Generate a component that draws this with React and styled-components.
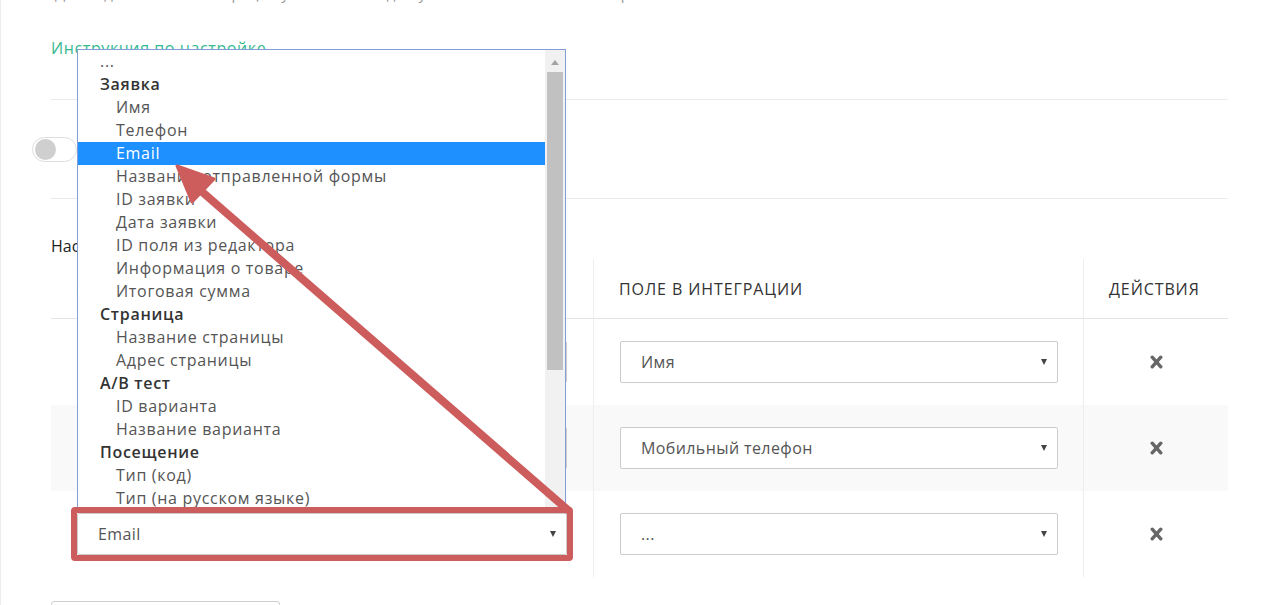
import React from 'react';
import styled, { createGlobalStyle } from 'styled-components';

const GlobalStyle = createGlobalStyle`
	html, body {
		margin: 0;
		padding: 0;
		background: #fff;
	}
	body {
		font-family: 'Open Sans', 'Lato', sans-serif;
		color: #333;
		overflow: hidden;
	}
`;

const Page = styled.div`
	position: relative;
	display: flow-root;
	width: 1273px;
	height: 605px;
	box-sizing: border-box;
	padding-left: 51px;
	box-shadow: inset 1px 0 0 #ececec;
	overflow: hidden;
`;

const Content = styled.div`
	width: 1177px;
`;

const TopNote = styled.p`
	margin: -16px 0 0 4px;
	height: 18px;
	line-height: 18px;
	font-size: 15px;
	color: #999;
	white-space: nowrap;
`;

const LinkSection = styled.div`
	height: 98px;
	box-sizing: border-box;
	padding-top: 35px;
	border-bottom: 1px solid #ebebeb;
`;

const Link = styled.a`
	font-size: 16px;
	line-height: 20px;
	color: #35b88f;
	text-decoration: none;
	letter-spacing: 0.6px;
`;

const ToggleSection = styled.div`
	height: 99px;
	box-sizing: border-box;
	display: flex;
	align-items: center;
	border-bottom: 1px solid #ebebeb;
`;

const Toggle = styled.span`
	display: inline-block;
	position: relative;
	margin-left: -19px;
	width: 45px;
	height: 25px;
	box-sizing: border-box;
	border: 1px solid #dedede;
	border-radius: 13px;
	background: #fff;
	&::before {
		content: '';
		position: absolute;
		top: 1px;
		left: 2px;
		width: 21px;
		height: 21px;
		border-radius: 50%;
		background: #cfcfcf;
	}
`;

const ToggleLabel = styled.span`
	margin-left: 14px;
	font-size: 16px;
	color: #333;
`;

const Heading = styled.h3`
	margin: 37px 0 3px;
	font-size: 16px;
	line-height: 20px;
	font-weight: 500;
	color: #222;
`;

const Table = styled.div`
	display: grid;
	grid-template-columns: 542px 490px 145px;
`;

const HeadCell = styled.div`
	height: 60px;
	display: flex;
	align-items: center;
	justify-content: flex-start;
	padding: 0 25px;
	box-sizing: border-box;
	border-bottom: 1px solid #e4e4e4;
	border-left: ${(p) => (p.$first ? 'none' : '1px solid #eeeeee')};
	font-size: 16px;
	font-weight: 500;
	text-transform: uppercase;
	color: #333;
	letter-spacing: 0.9px;
	white-space: nowrap;
`;

const Cell = styled.div`
	height: 86px;
	display: flex;
	align-items: center;
	justify-content: ${(p) => (p.$center ? 'center' : 'stretch')};
	padding: 0 ${(p) => (p.$first ? '26px' : '25px')} 0 26px;
	box-sizing: border-box;
	background: ${(p) => (p.$striped ? '#f9f9f9' : '#fff')};
	border-left: ${(p) => (p.$first ? 'none' : '1px solid #eeeeee')};
`;

const SelectBox = styled.div`
	position: relative;
	flex: 1;
	height: 42px;
	box-sizing: border-box;
	display: flex;
	align-items: center;
	padding: 0 36px 0 20px;
	background: #fff;
	border: 1px solid #cccccc;
	border-radius: 2px;
	font-size: 16px;
	letter-spacing: 0.4px;
	color: #555;
	&::after {
		content: '';
		position: absolute;
		right: 10px;
		top: 50%;
		margin-top: -3px;
		border-left: 3.5px solid transparent;
		border-right: 3.5px solid transparent;
		border-top: 6px solid #444;
	}
`;

const Marked = styled(SelectBox)`
	&::before {
		content: '';
		position: absolute;
		inset: -7px -7px -7px -7px;
		border: 6px solid #cd5c5c;
		border-radius: 4px;
		z-index: 3;
		pointer-events: none;
	}
`;

const Popup = styled.div`
	position: absolute;
	left: -1px;
	right: 0;
	bottom: calc(100% + 1px);
	height: 464px;
	box-sizing: border-box;
	border: 1px solid #7f9fd6;
	background: #fff;
	display: flex;
	z-index: 2;
	overflow: hidden;
	letter-spacing: 0.7px;
`;

const OptionList = styled.ul`
	flex: 1;
	margin: 0;
	padding: 0;
	list-style: none;
`;

const Option = styled.li`
	height: 23px;
	line-height: 23px;
	font-size: 16px;
	white-space: nowrap;
	padding-left: ${(p) => (p.$group || p.$top ? '22px' : '38px')};
	font-weight: ${(p) => (p.$group ? 600 : 400)};
	color: ${(p) => (p.$active ? '#fff' : p.$group ? '#333' : '#555')};
	background: ${(p) => (p.$active ? '#1e90ff' : 'transparent')};
`;

const ScrollTrack = styled.div`
	position: relative;
	width: 20px;
	background: #f1f1f1;
`;

const ScrollArrow = styled.span`
	position: absolute;
	left: 6px;
	${(p) => (p.$down ? 'bottom: 10px;' : 'top: 10px;')}
	border-left: 4.5px solid transparent;
	border-right: 4.5px solid transparent;
	${(p) =>
		p.$down ? 'border-top: 5px solid #a3a3a3;' : 'border-bottom: 5px solid #a3a3a3;'}
`;

const ScrollThumb = styled.div`
	position: absolute;
	left: 2px;
	right: 2px;
	top: 22px;
	height: 298px;
	background: #c1c1c1;
`;

const RemoveIcon = styled.svg`
	width: 13px;
	height: 14px;
	display: block;
`;

const AddButton = styled.div`
	margin-top: 24px;
	width: 229px;
	height: 40px;
	box-sizing: border-box;
	border: 1px solid #cfcfcf;
	border-radius: 3px;
`;

const Annotation = styled.svg`
	position: absolute;
	left: 0;
	top: 0;
	width: 1273px;
	height: 605px;
	pointer-events: none;
	z-index: 5;
`;

const options = [
	{ label: '...', top: true },
	{ label: 'Заявка', group: true },
	{ label: 'Имя' },
	{ label: 'Телефон' },
	{ label: 'Email', active: true },
	{ label: 'Название отправленной формы' },
	{ label: 'ID заявки' },
	{ label: 'Дата заявки' },
	{ label: 'ID поля из редактора' },
	{ label: 'Информация о товаре' },
	{ label: 'Итоговая сумма' },
	{ label: 'Страница', group: true },
	{ label: 'Название страницы' },
	{ label: 'Адрес страницы' },
	{ label: 'A/B тест', group: true },
	{ label: 'ID варианта' },
	{ label: 'Название варианта' },
	{ label: 'Посещение', group: true },
	{ label: 'Тип (код)' },
	{ label: 'Тип (на русском языке)' },
	{ label: 'Источник' },
	{ label: 'Канал' },
];

const rows = [
	{ site: 'Имя', target: 'Имя' },
	{ site: 'Телефон', target: 'Мобильный телефон' },
	{ site: 'Email', target: '...', marked: true },
];

function Remove() {
	return (
		<RemoveIcon viewBox="0 0 13 14">
			<path d="M2.2 2.2 L10.8 11.8 M10.8 2.2 L2.2 11.8" stroke="#666" strokeWidth="3.4" strokeLinecap="round" />
		</RemoveIcon>
	);
}

function Dropdown() {
	return (
		<Popup>
			<OptionList>
				{options.map((o) => (
					<Option key={o.label} $group={o.group} $top={o.top} $active={o.active}>
						{o.label}
					</Option>
				))}
			</OptionList>
			<ScrollTrack>
				<ScrollArrow />
				<ScrollThumb />
				<ScrollArrow $down />
			</ScrollTrack>
		</Popup>
	);
}

export default function App() {
	return (
		<>
			<GlobalStyle />
			<Page>
				<Content>
					<TopNote>Для подключения интеграции укажите ключ доступа из личного кабинета сервиса</TopNote>
					<LinkSection>
						<Link href="#">Инструкция по настройке</Link>
					</LinkSection>
					<ToggleSection>
						<Toggle />
						<ToggleLabel>Передавать заявки в CRM</ToggleLabel>
					</ToggleSection>
					<Heading>Настройка соответствия полей</Heading>
					<Table>
						<HeadCell $first>Поле на сайте</HeadCell>
						<HeadCell>Поле в интеграции</HeadCell>
						<HeadCell>Действия</HeadCell>
						{rows.map((r, i) => (
							<React.Fragment key={i}>
								<Cell $first $striped={i === 1}>
									{r.marked ? (
										<Marked>
											{r.site}
											<Dropdown />
										</Marked>
									) : (
										<SelectBox>{r.site}</SelectBox>
									)}
								</Cell>
								<Cell $striped={i === 1}>
									<SelectBox>{r.target}</SelectBox>
								</Cell>
								<Cell $center $striped={i === 1}>
									<Remove />
								</Cell>
							</React.Fragment>
						))}
					</Table>
					<AddButton />
				</Content>
				<Annotation viewBox="0 0 1273 605">
					<line x1="200" y1="190" x2="569" y2="511" stroke="#cd5c5c" strokeWidth="8" />
					<polygon points="177,166 192,202 214,179" fill="#cd5c5c" stroke="#cd5c5c" strokeWidth="3" strokeLinejoin="round" />
				</Annotation>
			</Page>
		</>
	);
}
